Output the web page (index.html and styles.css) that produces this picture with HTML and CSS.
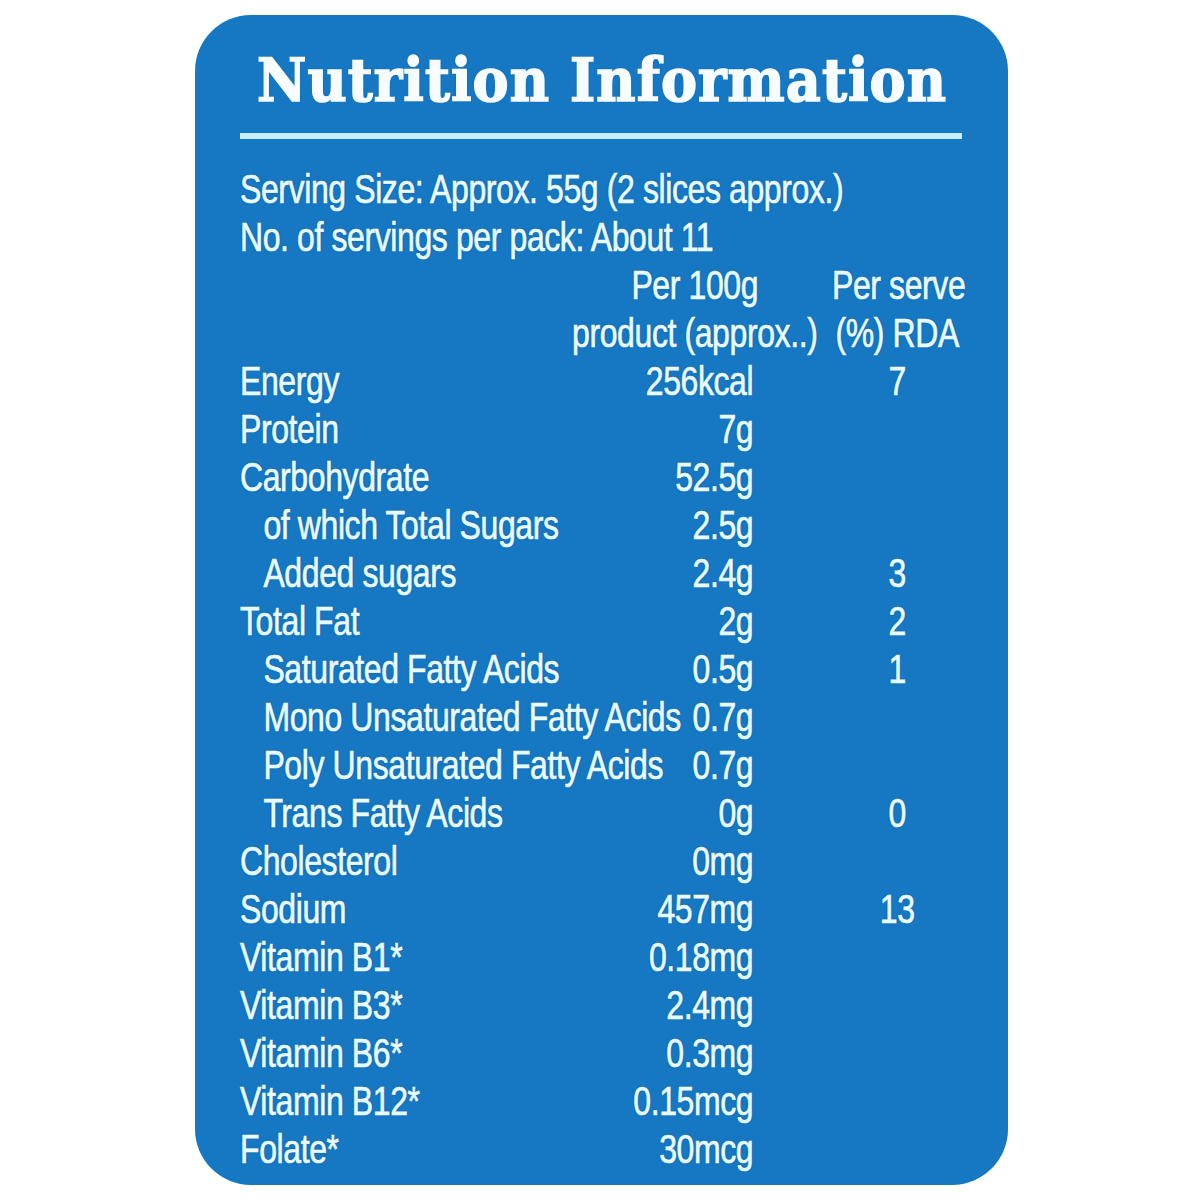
FILE: index.html
```html
<!DOCTYPE html>
<html lang="en">
<head>
<meta charset="utf-8">
<title>Nutrition Information</title>
<link rel="stylesheet" href="styles.css">
</head>
<body>
<div class="card">
  <h1 class="title">Nutrition Information</h1>
  <div class="rule"></div>
  <div class="table">
    <div class="line">Serving Size: Approx. 55g (2 slices approx.)</div>
    <div class="line">No. of servings per pack: About 11</div>
    <div class="head">
      <div class="label"></div>
      <div class="hcell">Per 100g<br>product (approx..)</div>
      <div class="hgap"></div>
      <div class="rda">Per serve<br>(%) RDA</div>
    </div>
    <div class="row"><div class="label">Energy</div><div class="val">256kcal</div><div class="gap"></div><div class="rda">7</div></div>
    <div class="row"><div class="label">Protein</div><div class="val">7g</div><div class="gap"></div><div class="rda"></div></div>
    <div class="row"><div class="label">Carbohydrate</div><div class="val">52.5g</div><div class="gap"></div><div class="rda"></div></div>
    <div class="row"><div class="label sub">of which Total Sugars</div><div class="val">2.5g</div><div class="gap"></div><div class="rda"></div></div>
    <div class="row"><div class="label sub">Added sugars</div><div class="val">2.4g</div><div class="gap"></div><div class="rda">3</div></div>
    <div class="row"><div class="label">Total Fat</div><div class="val">2g</div><div class="gap"></div><div class="rda">2</div></div>
    <div class="row"><div class="label sub">Saturated Fatty Acids</div><div class="val">0.5g</div><div class="gap"></div><div class="rda">1</div></div>
    <div class="row"><div class="label sub">Mono Unsaturated Fatty Acids</div><div class="val">0.7g</div><div class="gap"></div><div class="rda"></div></div>
    <div class="row"><div class="label sub">Poly Unsaturated Fatty Acids</div><div class="val">0.7g</div><div class="gap"></div><div class="rda"></div></div>
    <div class="row"><div class="label sub">Trans Fatty Acids</div><div class="val">0g</div><div class="gap"></div><div class="rda">0</div></div>
    <div class="row"><div class="label">Cholesterol</div><div class="val">0mg</div><div class="gap"></div><div class="rda"></div></div>
    <div class="row"><div class="label">Sodium</div><div class="val">457mg</div><div class="gap"></div><div class="rda">13</div></div>
    <div class="row"><div class="label">Vitamin B1*</div><div class="val">0.18mg</div><div class="gap"></div><div class="rda"></div></div>
    <div class="row"><div class="label">Vitamin B3*</div><div class="val">2.4mg</div><div class="gap"></div><div class="rda"></div></div>
    <div class="row"><div class="label">Vitamin B6*</div><div class="val">0.3mg</div><div class="gap"></div><div class="rda"></div></div>
    <div class="row"><div class="label">Vitamin B12*</div><div class="val">0.15mcg</div><div class="gap"></div><div class="rda"></div></div>
    <div class="row"><div class="label">Folate*</div><div class="val">30mcg</div><div class="gap"></div><div class="rda"></div></div>
  </div>
</div>
</body>
</html>
```

FILE: styles.css
```css
html, body {
  margin: 0;
  padding: 0;
  background: #ffffff;
}
body {
  width: 1200px;
  height: 1200px;
}
.card {
  box-sizing: border-box;
  margin: 15px 0 0 195px;
  width: 813px;
  height: 1170px;
  background: #1677c2;
  border-radius: 56px;
  padding: 30px 46px 0 45px;
  color: #e8fbff;
}
.title {
  margin: 0;
  font-family: "DejaVu Serif", serif;
  font-stretch: condensed;
  font-weight: bold;
  font-size: 60px;
  line-height: 70px;
  letter-spacing: 1.1px;
  color: #f6fcff;
  -webkit-text-stroke: 1.6px #f6fcff;
  text-shadow: 0 0 2px rgba(0, 50, 110, 0.5);
  text-align: center;
  padding-left: 2px;
}
.rule {
  height: 6px;
  background: #c8f0ff;
  margin: 18px 0 26px 0;
}
.table {
  width: 926px;
  transform: scaleX(0.78);
  transform-origin: 0 0;
  font-family: "Liberation Sans Narrow", "Liberation Sans", sans-serif;
  font-size: 41px;
  line-height: 48px;
  letter-spacing: -0.5px;
  white-space: nowrap;
  -webkit-text-stroke: 0.7px #e8fbff;
  text-shadow: 0 0 2px rgba(0, 50, 110, 0.55);
}
.line {
  height: 48px;
}
.head, .row {
  display: flex;
  height: 48px;
}
.head {
  height: 96px;
}
.label {
  flex: 1;
  min-width: 0;
}
.label.sub {
  padding-left: 30px;
}
.hcell {
  width: 320px;
  text-align: center;
}
.hgap {
  width: 16px;
}
.val {
  width: 180px;
  text-align: right;
}
.gap {
  width: 101px;
}
.rda {
  width: 167px;
  text-align: center;
}
```
